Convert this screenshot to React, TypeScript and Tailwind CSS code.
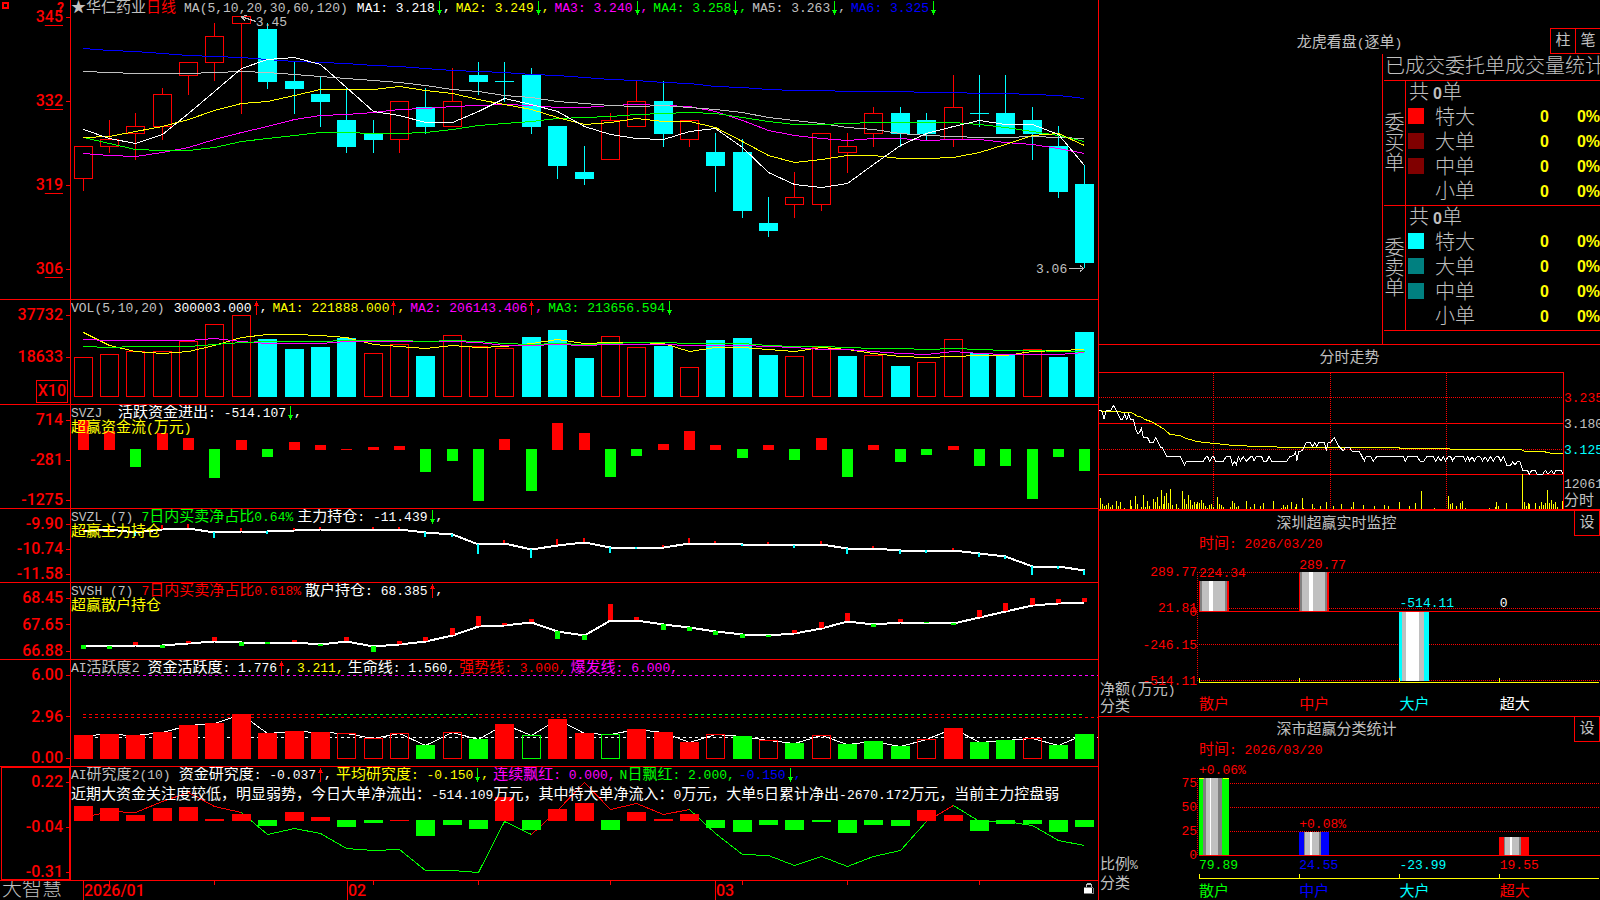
import type { ReactNode } from "react";
import clsx from "clsx";

const RED = "#ff0000";
const GREEN = "#00ff00";
const CYAN = "#00ffff";
const YELLOW = "#ffff00";
const MAGENTA = "#ff00ff";
const BLUE = "#0000ff";
const GREY = "#c0c0c0";
const DARK = "#808080";
const WHITE = "#ffffff";

// Plot area of the left column: x runs from 71 to 1098
const PLOT_LEFT = 71;
const PLOT_WIDTH = 1027;

const barX = (i: number) => Math.floor(83.2 + i * 26.358);
const points = (ys: number[], from = 0) =>
  ys.map((y, i) => `${barX(i + from) + 0.5},${y + 0.5}`).join(" ");

// [body top, body bottom, high, low, rising]
type Candle = [number, number, number, number, number];

const candles: Candle[] = [
  [146, 178, 146, 191, 1],
  [139, 146, 120, 153, 1],
  [126, 133, 113, 160, 1],
  [94, 126, 88, 140, 1],
  [62, 75, 62, 95, 1],
  [36, 62, 23, 81, 1],
  [16, 23, 16, 114, 1],
  [29, 82, 23, 89, 0],
  [81, 89, 62, 114, 0],
  [94, 102, 76, 127, 0],
  [120, 147, 88, 153, 0],
  [134, 140, 120, 153, 0],
  [101, 139, 101, 153, 1],
  [107, 127, 88, 134, 0],
  [101, 126, 68, 126, 1],
  [75, 82, 62, 95, 0],
  [81, 82, 62, 102, 0],
  [75, 127, 68, 134, 0],
  [126, 166, 126, 179, 0],
  [172, 179, 146, 185, 0],
  [120, 159, 113, 159, 1],
  [101, 126, 81, 126, 1],
  [101, 134, 81, 147, 0],
  [120, 139, 120, 147, 1],
  [152, 166, 133, 192, 0],
  [152, 211, 139, 218, 0],
  [223, 231, 197, 237, 0],
  [197, 204, 172, 218, 1],
  [133, 204, 133, 211, 1],
  [146, 152, 133, 173, 1],
  [113, 133, 107, 147, 1],
  [113, 134, 107, 147, 0],
  [120, 134, 113, 141, 0],
  [107, 139, 75, 147, 1],
  [113, 114, 75, 127, 0],
  [113, 134, 75, 134, 0],
  [120, 134, 107, 160, 0],
  [146, 192, 126, 198, 0],
  [184, 263, 165, 268, 0],
];

const priceLines = [
  { color: BLUE, ys: [48, 50, 51, 53, 55, 56, 57, 59, 61, 62, 63, 65, 66, 68, 70, 71, 72, 74, 75, 77, 79, 80, 82, 83, 86, 87, 89, 90, 90, 91, 91, 91, 92, 92, 93, 93, 94, 95, 98] },
  { color: MAGENTA, ys: [153, 155, 156, 152, 147, 139, 132, 126, 119, 115, 114, 112, 109, 108, 106, 105, 104, 105, 107, 107, 105, 104, 105, 106, 111, 120, 130, 135, 138, 140, 138, 138, 140, 139, 139, 142, 144, 148, 153] },
  { color: GREY, ys: [71, 72, 73, 73, 73, 72, 71, 72, 74, 76, 78, 80, 82, 85, 89, 91, 95, 97, 101, 103, 105, 106, 105, 107, 109, 112, 117, 120, 123, 127, 129, 133, 135, 136, 137, 137, 136, 137, 138] },
  { color: GREEN, ys: [137, 143, 149, 150, 150, 147, 141, 138, 135, 132, 132, 133, 133, 132, 129, 125, 123, 121, 118, 117, 116, 114, 113, 112, 113, 117, 121, 124, 124, 123, 122, 122, 122, 122, 124, 127, 131, 135, 141] },
  { color: YELLOW, ys: [137, 136, 131, 126, 119, 110, 103, 101, 95, 89, 89, 89, 86, 90, 93, 99, 104, 109, 117, 124, 122, 118, 121, 121, 127, 141, 155, 162, 159, 155, 155, 158, 158, 157, 152, 144, 135, 133, 145] },
  { color: WHITE, ys: [129, 138, 143, 134, 113, 91, 68, 59, 57, 64, 87, 111, 115, 122, 122, 111, 98, 104, 111, 126, 134, 138, 139, 131, 128, 147, 172, 184, 187, 183, 164, 145, 133, 126, 120, 124, 124, 134, 165] },
];

const volumeTops = [357, 354, 351, 351, 341, 324, 315, 339, 349, 347, 338, 353, 344, 356, 335, 346, 348, 337, 330, 358, 336, 347, 346, 367, 340, 338, 355, 356, 347, 356, 355, 366, 362, 339, 353, 355, 349, 357, 332];
const volumeRising = [1, 1, 1, 1, 1, 1, 1, 0, 0, 0, 0, 1, 1, 0, 1, 1, 1, 0, 0, 0, 1, 1, 0, 1, 0, 0, 0, 1, 1, 0, 1, 0, 1, 1, 0, 0, 1, 0, 0];

const volumeLines = [
  { color: YELLOW, ys: [332, 345, 351, 353, 351, 345, 337, 334, 334, 335, 337, 344, 346, 348, 345, 347, 346, 343, 339, 343, 342, 342, 343, 351, 347, 347, 349, 351, 347, 349, 353, 356, 357, 356, 355, 355, 351, 350, 349] },
  { color: MAGENTA, ys: [339, 340, 340, 340, 340, 338, 341, 343, 343, 343, 341, 341, 341, 341, 341, 342, 345, 345, 344, 345, 344, 344, 344, 345, 345, 345, 346, 347, 349, 349, 351, 353, 354, 351, 353, 354, 354, 354, 352] },
  { color: GREEN, ys: [346, 347, 346, 346, 346, 344, 342, 341, 341, 341, 340, 340, 340, 341, 340, 341, 343, 344, 343, 344, 343, 342, 342, 343, 343, 343, 345, 346, 346, 347, 348, 348, 349, 348, 349, 350, 350, 351, 351] },
];

// Signed heights: positive above the zero line
const fundFlow = [30, 19, -18, 17, 12, -29, 10, -8, 8, 5, 1, 3, 4, -23, -12, -52, 11, -42, 27, 17, -28, -7, 6, 19, 5, -9, 5, -11, 12, -28, 5, -13, -6, 4, -17, -17, -50, -8, -22];

const mainHold = [531, 529, 532, 529, 528, 532, 531, 531, 530, 529, 529, 529, 529, 532, 534, 544, 543, 549, 545, 542, 547, 547, 547, 543, 543, 544, 544, 545, 544, 548, 548, 550, 550, 550, 553, 556, 566, 566, 570];
const mainHoldTicks = [2, 4, -4, 4, 4, -6, 3, -3, 2, 2, 0, 2, 2, -5, -3, -10, 3, -9, 6, 4, -6, -2, 2, 5, 2, -2, 2, -3, 3, -6, 2, -4, -3, 2, -4, -3, -9, -3, -5];

const retailHold = [645, 646, 645, 645, 643, 641, 642, 642, 642, 644, 641, 646, 644, 641, 635, 626, 625, 622, 631, 635, 620, 620, 624, 627, 631, 634, 635, 633, 628, 621, 624, 622, 622, 623, 617, 611, 605, 603, 602];
const retailTicks = [-4, -3, 3, -3, 2, 4, -4, -2, 2, -2, 4, -6, 3, 4, 7, 10, 2, 3, -8, -5, 16, 3, -6, -4, -4, -4, -2, 3, 6, 8, -3, 3, -1, -2, 7, 8, 7, 4, 4];

// Upper case is a filled bar, lower case an outlined one
const activityKinds = "RRRRRRRRRRrrrGrGRgRRgRRRrGrGrGGGrRGGrGG";
const activityTops = [735, 734, 735, 732, 725, 723, 714, 733, 731, 732, 733, 738, 733, 745, 732, 739, 724, 735, 719, 733, 734, 729, 732, 742, 734, 736, 740, 743, 735, 744, 741, 746, 739, 728, 742, 740, 738, 745, 734];

const researchBars = [15, 13, 6, 13, 14, 2, 7, -6, 9, 4, -7, -3, 1, -16, -5, -9, 24, -10, 12, 18, -10, 9, 2, 7, -8, -12, -5, -10, -2, -13, -5, -6, 11, 6, -11, -4, -4, -12, -7];
const researchLine = [817, 811, 812, 801, 792, 806, 812, 834, 828, 833, 848, 850, 849, 870, 870, 872, 821, 834, 810, 782, 809, 803, 814, 809, 833, 854, 855, 865, 856, 866, 856, 850, 821, 805, 821, 821, 825, 840, 845];
const researchRuns: [number, number, string][] = [
  [0, 6, RED],
  [6, 17, GREEN],
  [17, 23, RED],
  [23, 32, GREEN],
  [32, 33, RED],
  [33, 38, GREEN],
];

// Intraday chart units: 3 per pixel
const intradayAverage =
  "27,211 48,216 62,214 79,213 92,216 118,217 130,220 142,229 154,231 164,238 184,245 200,254 220,266 240,283 270,287 290,296 320,304 340,307 370,310 426,316 492,319 594,322 925,322 930,325 1078,325 1082,328 1293,328 1305,334 1357,334 1385,340 1420,340";
const intradayPrice =
  "28,211 36,215 42,237 48,212 62,211 70,196 76,205 92,238 98,237 104,223 110,238 116,223 122,238 130,238 138,270 143,280 148,279 154,265 160,291 172,292 180,307 190,307 197,293 212,322 216,322 230,349 270,349 284,375 289,364 340,364 348,350 353,350 359,364 367,350 371,350 377,364 400,364 408,350 421,350 428,375 434,364 439,375 445,350 451,363 460,350 469,364 482,350 488,350 492,363 499,350 515,350 521,364 530,364 537,349 545,364 590,364 599,350 611,346 617,335 620,364 626,335 637,332 649,307 661,307 667,320 674,308 680,320 686,308 703,308 709,332 714,308 722,307 733,292 745,318 760,332 767,322 779,322 786,334 808,334 823,363 828,350 842,350 850,363 860,350 940,349 946,364 953,350 982,350 990,363 1002,363 1010,350 1030,350 1037,363 1045,350 1053,363 1060,350 1067,363 1074,350 1082,350 1088,363 1095,350 1120,350 1126,363 1133,350 1139,363 1146,350 1153,363 1161,350 1170,350 1178,363 1185,350 1193,363 1201,350 1210,363 1218,350 1226,350 1232,363 1240,350 1250,375 1262,375 1268,365 1275,375 1282,365 1290,365 1298,391 1312,391 1318,402 1325,391 1335,391 1342,403 1358,403 1366,391 1374,403 1384,391 1392,403 1398,391 1413,391 1420,403";
const intradayVolume = [
  [31, 474], [37, 492], [43, 498], [49, 495], [55, 489], [61, 501], [67, 495], [79, 483], [85, 498], [91, 486], [103, 504], [121, 480], [124, 498],
  [136, 468], [142, 492], [154, 501], [160, 465], [166, 501], [172, 483], [178, 498], [190, 477], [196, 486], [202, 471], [208, 498], [214, 450],
  [220, 492], [223, 468], [229, 459], [235, 489], [241, 447], [247, 495], [259, 492], [265, 504], [277, 453], [283, 477], [289, 492], [295, 465],
  [301, 480], [307, 495], [313, 486], [319, 492], [322, 486], [328, 489], [334, 480], [340, 489], [346, 498], [352, 504], [358, 495], [364, 492],
  [370, 501], [382, 471], [388, 492], [394, 495], [400, 501], [421, 501], [427, 483], [433, 489], [439, 501], [445, 498], [469, 483], [481, 501],
  [493, 492], [511, 498], [520, 489], [550, 483], [574, 504], [580, 495], [586, 501], [592, 495], [604, 486], [616, 501], [619, 492], [637, 474],
  [640, 504], [667, 492], [673, 504], [691, 498], [709, 486], [730, 498], [754, 492], [784, 501], [790, 486], [820, 495], [853, 498], [883, 495],
  [895, 498], [928, 486], [958, 498], [976, 489], [994, 453], [1033, 504], [1075, 468], [1081, 492], [1087, 489], [1099, 498], [1111, 489],
  [1117, 483], [1126, 504], [1198, 504], [1216, 501], [1219, 486], [1225, 498], [1249, 489], [1297, 403], [1303, 486], [1309, 498], [1315, 489],
  [1318, 492], [1336, 489], [1348, 498], [1354, 486], [1360, 495], [1366, 489], [1372, 450], [1378, 489], [1384, 480], [1390, 492], [1396, 486],
  [1402, 501], [1417, 483],
];

/** Mixed text: wide characters and half-width ones have their own size. */
function Txt({ children }: { children: string }) {
  const parts = children.split(/([\u2600-\uffff]+)/).filter(Boolean);
  return (
    <>
      {parts.map((part, i) =>
        /^[\u2600-\uffff]/.test(part) ? (
          <span key={i} className="text-[15px]">
            {part}
          </span>
        ) : (
          <span key={i} className="whitespace-pre text-[13px]">
            {part}
          </span>
        ),
      )}
    </>
  );
}

function Arrow({ dir }: { dir: "up" | "down" }) {
  return (
    <svg className="h-3.5 w-2 shrink-0" viewBox="0 0 8 14" shapeRendering="crispEdges">
      {dir === "down" ? (
        <path d="M4 0h1v9h2v1h-1v2h-1v2h-1v-2h-1v-2h-1v-1h2z" fill={GREEN} />
      ) : (
        <path d="M4 14h1v-9h2v-1h-1v-2h-1v-2h-1v2h-1v2h-1v1h2z" fill={RED} />
      )}
    </svg>
  );
}

type LegendItem = {
  text: string;
  color: string;
  arrow?: "up" | "down";
  comma?: boolean;
};

type LegendProps = {
  title: ReactNode;
  items: LegendItem[];
  gap?: string;
};

function Legend({ title, items, gap = "gap-1" }: LegendProps) {
  return (
    <div className={clsx("absolute left-0 top-0 flex h-4 items-center whitespace-nowrap leading-4", gap)}>
      <span className="mr-1 text-[#c0c0c0]">{title}</span>
      {items.map((item) => (
        <span key={item.text} className={clsx("flex items-center", item.color)}>
          <span>
            <Txt>{item.text}</Txt>
          </span>
          {item.arrow && <Arrow dir={item.arrow} />}
          {item.comma && <Txt>,</Txt>}
        </span>
      ))}
    </div>
  );
}

function AxisLabel({ children }: { children: ReactNode }) {
  return (
    <div className="flex h-4 items-center justify-end gap-[3px]">
      <span>{children}</span>
      <span className="h-px w-1 bg-[#f00]" />
    </div>
  );
}

type PanelProps = {
  height: string;
  labels?: string[];
  top: number;
  size: number;
  chart: ReactNode;
  axisClass?: string;
  axis?: ReactNode;
  children?: ReactNode;
};

function Panel({ height, labels = [], top, size, chart, axisClass = "pt-[7px]", axis, children }: PanelProps) {
  return (
    <section className={clsx("flex border-b border-[#f00]", height)}>
      <div
        className={clsx(
          "relative flex w-[71px] shrink-0 flex-col justify-between border-r border-[#f00] font-['Roboto','Liberation_Sans',sans-serif] text-base font-medium leading-4 text-[#f00]",
          axisClass,
        )}
      >
        {axis ?? labels.map((label) => <AxisLabel key={label}>{label}</AxisLabel>)}
      </div>
      <div className="relative min-w-0 flex-1 overflow-hidden">
        <svg
          className="block h-full w-full"
          viewBox={`${PLOT_LEFT} ${top} ${PLOT_WIDTH} ${size}`}
          preserveAspectRatio="none"
          shapeRendering="crispEdges"
          fill="none"
        >
          {chart}
        </svg>
        {children}
      </div>
    </section>
  );
}

function PriceChart() {
  return (
    <>
      {candles.map(([top, bottom, high, low, rising], i) => {
        const x = barX(i);
        return rising ? (
          <g key={i} stroke={RED}>
            <path d={`M${x + 0.5} ${high}V${top}M${x + 0.5} ${bottom}V${low}`} />
            <rect x={x - 8.5} y={top + 0.5} width="18" height={bottom - top} />
          </g>
        ) : (
          <g key={i} fill={CYAN}>
            <rect x={x} y={high} width="1" height={low - high} />
            <rect x={x - 9} y={top} width="19" height={bottom - top} />
          </g>
        );
      })}
      {priceLines.map((line) => (
        <polyline key={line.color} points={points(line.ys)} stroke={line.color} />
      ))}
      <path d="M241 16.5l15 5M241 16.5l6 -1M241 16.5l4 4" stroke={GREY} />
      <path d="M1069 268.5h15M1084 268.5l-4 -3M1084 268.5l-4 3" stroke={GREY} />
    </>
  );
}

function VolumeChart() {
  return (
    <>
      {volumeTops.map((y, i) =>
        volumeRising[i] ? (
          <rect key={i} x={barX(i) - 8.5} y={y + 0.5} width="18" height={396 - y} stroke={RED} />
        ) : (
          <rect key={i} x={barX(i) - 9} y={y} width="19" height={397 - y} fill={CYAN} />
        ),
      )}
      {volumeLines.map((line) => (
        <polyline key={line.color} points={points(line.ys)} stroke={line.color} />
      ))}
    </>
  );
}

function SignedBars({ values, zero, width }: { values: number[]; zero: number; width: number }) {
  return (
    <>
      {values.map((v, i) => (
        <rect
          key={i}
          x={barX(i) - (width - 1) / 2}
          y={v > 0 ? zero + 1 - v : zero}
          width={width}
          height={Math.abs(v)}
          fill={v > 0 ? RED : GREEN}
        />
      ))}
    </>
  );
}

function HoldChart({ line, ticks, width, down }: { line: number[]; ticks: number[]; width: number; down: string }) {
  return (
    <>
      <polyline points={points(line)} stroke={WHITE} strokeWidth="2" />
      {ticks.map((v, i) => (
        <rect
          key={i}
          x={barX(i) - Math.floor(width / 2)}
          y={v > 0 ? line[i] - v : line[i]}
          width={width}
          height={Math.abs(v)}
          fill={v > 0 ? RED : down}
        />
      ))}
    </>
  );
}

function ActivityChart() {
  const greenRuns = `M${barX(9)} 714.5H${barX(15)}M${barX(23)} 714.5H${barX(32)}M${barX(33)} 714.5H1084`;
  return (
    <>
      <path d="M83 675.5H1098" stroke={MAGENTA} strokeDasharray="3 3" />
      <path d="M83 714.5H1084M83 717.5H1098" stroke={RED} strokeDasharray="3 3" />
      <path d={greenRuns} stroke="#000" />
      <path d={greenRuns} stroke={GREEN} strokeDasharray="3 3" />
      <path d="M83 737.5H1098" stroke={WHITE} strokeDasharray="3 3" />
      <polyline points={points(activityTops)} stroke={WHITE} />
      {activityTops.map((y, i) => {
        const kind = activityKinds[i];
        const color = kind.toUpperCase() === "R" ? RED : GREEN;
        return kind === kind.toUpperCase() ? (
          <rect key={i} x={barX(i) - 9} y={y} width="19" height={759 - y} fill={color} />
        ) : (
          <rect key={i} x={barX(i) - 8.5} y={y + 0.5} width="18" height={758 - y} stroke={color} />
        );
      })}
    </>
  );
}

function ResearchChart() {
  return (
    <>
      {researchRuns.map(([from, to, color]) => (
        <polyline key={from} points={points(researchLine.slice(from, to + 1), from)} stroke={color} />
      ))}
      <SignedBars values={researchBars} zero={820} width={19} />
    </>
  );
}

function Caption({ children }: { children: string }) {
  return (
    <p className="absolute left-0 top-[15px] whitespace-nowrap leading-4 text-[#ff0]">
      <Txt>{children}</Txt>
    </p>
  );
}

function TimeAxis() {
  return (
    <footer className="flex h-[19px] overflow-hidden">
      <div className="w-[71px] shrink-0 pl-0.5 text-xl font-light leading-5 text-[#c0c0c0]">大智慧</div>
      <div className="relative grid min-w-0 flex-1 grid-cols-[12fr_264fr_368fr_383fr] font-['Roboto','Liberation_Sans',sans-serif] text-base font-medium leading-5 text-[#f00]">
        <span />
        <span className="border-l border-[#f00]">2026/01</span>
        <span className="border-l border-[#f00]">02</span>
        <span className="border-l border-[#f00]">03</span>
        <svg
          className="absolute left-0 top-0 h-1 w-full"
          viewBox={`${PLOT_LEFT} 0 ${PLOT_WIDTH} 4`}
          preserveAspectRatio="none"
          shapeRendering="crispEdges"
        >
          {[1, 5, 11, 15, 20, 25, 29, 34].map((i) => (
            <rect key={i} x={barX(i)} y="0" width="1" height="4" fill={RED} />
          ))}
        </svg>
        <svg className="absolute right-1 top-0.5 h-3 w-2.5" viewBox="0 0 10 12" shapeRendering="crispEdges">
          <path d="M2 4V1h1V0h4v1h1v3H7V2H3v2z" fill={GREY} />
          <path d="M0 5h8v5H0z" fill={WHITE} />
          <path d="M0 4h9v1H0zM9 5h1v6H0v-1h9z" fill={DARK} />
        </svg>
      </div>
    </footer>
  );
}

type OrderRow = { name: string; swatch: string };

const buyRows: OrderRow[] = [
  { name: "特大", swatch: "bg-[#f00]" },
  { name: "大单", swatch: "bg-[#800000]" },
  { name: "中单", swatch: "bg-[#800000]" },
  { name: "小单", swatch: "bg-black" },
];

const sellRows: OrderRow[] = [
  { name: "特大", swatch: "bg-[#0ff]" },
  { name: "大单", swatch: "bg-[#008080]" },
  { name: "中单", swatch: "bg-[#008080]" },
  { name: "小单", swatch: "bg-black" },
];

function OrderGroup({ side, rows }: { side: string; rows: OrderRow[] }) {
  return (
    <tbody>
      <tr className="h-[25px]">
        <th
          rowSpan={5}
          scope="rowgroup"
          className="border-b border-r border-[#f00] p-0 pt-1 text-center text-xl font-light leading-5"
        >
          {side.split("").map((char) => (
            <span key={char} className="block">
              {char}
            </span>
          ))}
        </th>
        <td colSpan={4} className="p-0 pl-[3px]">
          共<b className="ml-1 font-['Liberation_Sans',Arial,sans-serif] text-base font-bold leading-5">0</b>单
        </td>
      </tr>
      {rows.map((row, i) => (
        <tr
          key={row.name}
          className={clsx("h-[25px]", i === rows.length - 1 && "[&>td]:border-b [&>td]:border-[#f00]")}
        >
          <td className="p-0 pl-0.5 pt-0.5 align-top">
            <span className={clsx("block size-4", row.swatch)} />
          </td>
          <td className="p-0">{row.name}</td>
          <td className="p-0 text-right align-top font-['Liberation_Sans',Arial,sans-serif] text-base font-bold leading-[22px] text-[#ff0]">
            0
          </td>
          <td className="p-0 text-right align-top font-['Liberation_Sans',Arial,sans-serif] text-base font-bold leading-[22px] text-[#ff0]">
            0%
          </td>
        </tr>
      ))}
    </tbody>
  );
}

function OrderPanel() {
  return (
    <section className="flex h-[345px] flex-col overflow-hidden border-b border-[#f00] pt-7">
      <header className="relative flex h-[26px] shrink-0 items-center justify-center text-[#c0c0c0]">
        <h2 className="pt-1">
          <Txt>龙虎看盘(逐单)</Txt>
        </h2>
        <div className="absolute -right-px top-0 flex">
          <button type="button" className="size-[26px] border border-[#f00] pt-px text-[15px] leading-4">
            柱
          </button>
          <button type="button" className="-ml-px size-[26px] border border-[#f00] pt-px text-[15px] leading-4">
            笔
          </button>
        </div>
      </header>
      <div className="ml-auto w-[218px] flex-1 overflow-hidden border-l border-[#f00] pl-px text-xl font-light leading-5 text-[#c0c0c0]">
        <h3 className="h-[27px] whitespace-nowrap border-b border-[#f00] pl-px font-light leading-7">
          已成交委托单成交量统计
        </h3>
        <table className="w-full table-fixed border-separate border-spacing-0">
          <colgroup>
            <col className="w-[22px]" />
            <col className="w-[29px]" />
            <col />
            <col className="w-[60px]" />
            <col className="w-[51px]" />
          </colgroup>
          <OrderGroup side="委买单" rows={buyRows} />
          <OrderGroup side="委卖单" rows={sellRows} />
        </table>
      </div>
    </section>
  );
}

function IntradayPanel() {
  return (
    <section className="flex h-[166px] flex-col border-b border-[#f00]">
      <h2 className="flex h-[27px] items-center justify-center pt-0.5 text-[#c0c0c0]">
        <Txt>分时走势</Txt>
      </h2>
      <div className="flex min-h-0 flex-1 border-b border-[#f00]">
        <div className="min-w-0 flex-1 border-r border-t border-[#f00]">
          <svg
            className="block h-full w-full"
            viewBox="27 99 1392 408"
            preserveAspectRatio="none"
            shapeRendering="crispEdges"
            fill="none"
            strokeWidth="3"
          >
            <path
              d="M27 172.5H1420M27 328.5H1420M370.5 99V507M721.5 99V507M1069.5 99V507"
              stroke={RED}
              strokeDasharray="3 3"
            />
            <path d="M27 250.5H1420M27 403.5H1420" stroke={RED} />
            <polyline points={intradayAverage} stroke={YELLOW} />
            <polyline points={intradayPrice} stroke={WHITE} />
            {intradayVolume.map(([x, y]) => (
              <rect key={x} x={x - 1} y={y} width="3" height={507 - y} fill={YELLOW} />
            ))}
          </svg>
        </div>
        <div className="flex w-9 shrink-0 flex-col overflow-hidden whitespace-nowrap pt-[13px] text-[#c0c0c0]">
          <span className="h-[26px] leading-[26px] text-[#f00]">
            <Txt>3.235</Txt>
          </span>
          <span className="h-[26px] leading-[26px]">
            <Txt>3.180</Txt>
          </span>
          <span className="h-[26px] leading-[26px] text-[#0ff]">
            <Txt>3.125</Txt>
          </span>
          <span className="mt-[13px] h-[18px] leading-4">
            <Txt>12061</Txt>
          </span>
          <span className="h-4 leading-4">
            <Txt>分时</Txt>
          </span>
        </div>
      </div>
    </section>
  );
}

// Shaded column: [width, color] strips from left to right
type Strip = [number, string];

function Cylinder({ x, y, height, strips }: { x: number; y: number; height: number; strips: Strip[] }) {
  let offset = x;
  return (
    <>
      {strips.map(([width, color], i) => {
        const left = offset;
        offset += width;
        return <rect key={i} x={left} y={y} width={width} height={height} fill={color} />;
      })}
    </>
  );
}

const redStrips: Strip[] = [[1, RED], [2, DARK], [7, GREY], [4, WHITE], [12, GREY], [2, DARK], [2, RED]];
const cyanStrips: Strip[] = [[3, CYAN], [4, GREY], [13, WHITE], [5, GREY], [5, CYAN]];
const greenStrips: Strip[] = [[4, GREEN], [3, DARK], [4, GREY], [1, WHITE], [7, GREY], [4, DARK], [7, GREEN]];
const shortStrips = (color: string): Strip[] => [[5, color], [1, DARK], [5, GREY], [2, WHITE], [7, GREY], [2, DARK], [8, color]];

function StatHeader({ title }: { title: string }) {
  return (
    <header className="flex items-start">
      <h2 className="flex h-6 flex-1 items-center justify-center pt-1 text-[#c0c0c0]">
        <Txt>{title}</Txt>
      </h2>
      <button
        type="button"
        className="-mt-px size-[26px] border border-[#f00] pt-0.5 text-[15px] leading-4 text-[#c0c0c0]"
      >
        设
      </button>
    </header>
  );
}

function CategoryRow({ items }: { items: [string, string][] }) {
  return (
    <div className="grid grid-cols-4 pl-0.5 leading-4">
      {items.map(([name, color], i) => (
        <span key={i} className={color}>
          <Txt>{name}</Txt>
        </span>
      ))}
    </div>
  );
}

function MonitorPanel() {
  return (
    <section className="flex h-[206px] flex-col border-b border-[#f00]">
      <StatHeader title="深圳超赢实时监控" />
      <p className="ml-[100px] h-4 leading-4 text-[#f00]">
        <Txt>时间: 2026/03/20</Txt>
      </p>
      <div className="flex flex-1 pt-[13px]">
        <div className="flex w-[98px] shrink-0 flex-col justify-between">
          <div className="relative flex h-[125px] flex-col justify-between text-right leading-4 text-[#f00]">
            <Txt>289.77</Txt>
            <Txt>21.81</Txt>
            <Txt>-246.15</Txt>
            <Txt>-514.11</Txt>
            <span className="absolute right-0 top-[39px]">
              <Txt>0</Txt>
            </span>
          </div>
          <div className="-mt-2 pl-px leading-4 text-[#c0c0c0]">
            <div>
              <Txt>净额(万元)</Txt>
            </div>
            <div className="pb-1">
              <Txt>分类</Txt>
            </div>
          </div>
        </div>
        <div className="relative min-w-0 flex-1">
          <svg
            className="block h-[120px] w-full"
            viewBox="1197 565 403 120"
            preserveAspectRatio="none"
            shapeRendering="crispEdges"
            fill="none"
          >
            <path
              d="M1197.5 572V680M1197 572.5H1600M1197 608.5H1600M1197 644.5H1600M1197 680.5H1600"
              stroke={RED}
              strokeDasharray="1 1"
            />
            <Cylinder x={1199} y={581} height={30} strips={redStrips} />
            <Cylinder x={1299} y={572} height={39} strips={redStrips} />
            <Cylinder x={1399} y={612} height={69} strips={cyanStrips} />
            <path d="M1199 611.5H1600" stroke={RED} />
            <path d="M1199.5 678V682.5H1599M1299.5 678V682M1399.5 678V682M1499.5 678V682" stroke={YELLOW} />
          </svg>
          <div className="absolute inset-x-0 top-0 grid grid-cols-4 pl-0.5 leading-4">
            <span className="text-[#f00]">
              <Txt>224.34</Txt>
            </span>
            <span className="-mt-2 text-[#f00]">
              <Txt>289.77</Txt>
            </span>
            <span className="mt-[30px] text-[#0ff]">
              <Txt>-514.11</Txt>
            </span>
            <span className="mt-[30px] text-white">
              <Txt>0</Txt>
            </span>
          </div>
          <div className="pt-3">
            <CategoryRow
              items={[
                ["散户", "text-[#f00]"],
                ["中户", "text-[#f00]"],
                ["大户", "text-[#0ff]"],
                ["超大", "text-white"],
              ]}
            />
          </div>
        </div>
      </div>
    </section>
  );
}

function SharePanel() {
  return (
    <section className="flex h-[183px] flex-col overflow-hidden">
      <StatHeader title="深市超赢分类统计" />
      <p className="ml-[100px] h-4 leading-4 text-[#f00]">
        <Txt>时间: 2026/03/20</Txt>
      </p>
      <div className="flex flex-1 pt-1">
        <div className="flex w-[98px] shrink-0 flex-col">
          <div className="mt-[14px] flex h-[88px] flex-col justify-between text-right leading-4 text-[#f00]">
            <Txt>75</Txt>
            <Txt>50</Txt>
            <Txt>25</Txt>
            <Txt>0</Txt>
          </div>
          <div className="-mt-2 pl-px leading-[18px] text-[#c0c0c0]">
            <div>
              <Txt>比例%</Txt>
            </div>
            <div>
              <Txt>分类</Txt>
            </div>
          </div>
        </div>
        <div className="relative min-w-0 flex-1">
          <svg
            className="block h-[118px] w-full"
            viewBox="1197 762 403 118"
            preserveAspectRatio="none"
            shapeRendering="crispEdges"
            fill="none"
          >
            <path
              d="M1197.5 778V855M1230 783.5H1600M1230 807.5H1600M1230 831.5H1600"
              stroke={RED}
              strokeDasharray="1 1"
            />
            <Cylinder x={1199} y={778} height={77} strips={greenStrips} />
            <path d="M1199 778.5h5M1223 778.5h6" stroke={YELLOW} />
            <Cylinder x={1299} y={832} height={23} strips={shortStrips(BLUE)} />
            <Cylinder x={1499} y={837} height={18} strips={shortStrips(RED)} />
            <path d="M1199 855.5H1600" stroke={RED} />
            <path d="M1199.5 874V878.5H1599M1299.5 874V878M1399.5 874V878M1499.5 874V878" stroke={YELLOW} />
          </svg>
          <div className="absolute inset-x-0 top-0 grid grid-cols-4 pl-0.5 leading-4 text-[#f00]">
            <span>
              <Txt>+0.06%</Txt>
            </span>
            <span className="mt-[54px]">
              <Txt>+0.08%</Txt>
            </span>
          </div>
          <div className="absolute inset-x-0 top-[95px]">
            <CategoryRow
              items={[
                ["79.89", "text-[#0f0]"],
                ["24.55", "text-[#00f]"],
                ["-23.99", "text-[#0ff]"],
                ["19.55", "text-[#f00]"],
              ]}
            />
          </div>
          <div className="pt-1">
            <CategoryRow
              items={[
                ["散户", "text-[#0f0]"],
                ["中户", "text-[#00f]"],
                ["大户", "text-[#0ff]"],
                ["超大", "text-[#f00]"],
              ]}
            />
          </div>
        </div>
      </div>
    </section>
  );
}

export default function App() {
  return (
    <div className="grid min-h-screen grid-cols-[minmax(0,1099fr)_minmax(0,501fr)] content-start overflow-hidden bg-black font-['Liberation_Mono','Noto_Sans_CJK_SC',monospace] text-white">
      <main className="border-r border-[#f00]">
        <Panel
          height="h-[300px]"
          top={0}
          size={299}
          chart={<PriceChart />}
          axisClass="pt-[9px] pb-[22px]"
          axis={
            <>
              <span className="absolute left-0.5 top-0.5 size-[7px] border-2 border-[#f00]" />
              <b className="absolute left-[57px] top-0 text-sm leading-4">?</b>
              {["345", "332", "319", "306"].map((label) => (
                <AxisLabel key={label}>
                  {label[0]}
                  <span className="underline decoration-1 underline-offset-[3px]">{label.slice(1)}</span>
                </AxisLabel>
              ))}
            </>
          }
        >
          <Legend
            gap="gap-[5px]"
            title={
              <>
                <Txt>★华仁药业</Txt>
                <span className="mr-2 text-[#f00]">
                  <Txt>日线</Txt>
                </span>
                <Txt>MA(5,10,20,30,60,120)</Txt>
              </>
            }
            items={[
              { text: "MA1: 3.218", color: "text-white", arrow: "down", comma: true },
              { text: "MA2: 3.249", color: "text-[#ff0]", arrow: "down", comma: true },
              { text: "MA3: 3.240", color: "text-[#f0f]", arrow: "down", comma: true },
              { text: "MA4: 3.258", color: "text-[#0f0]", arrow: "down", comma: true },
              { text: "MA5: 3.263", color: "text-[#c0c0c0]", arrow: "down", comma: true },
              { text: "MA6: 3.325", color: "text-[#00f]", arrow: "down" },
            ]}
          />
          <span className="absolute left-[18%] top-3.5 leading-4 text-[#c0c0c0]">
            <Txt>3.45</Txt>
          </span>
          <span className="absolute right-[3%] top-[261px] leading-4 text-[#c0c0c0]">
            <Txt>3.06</Txt>
          </span>
        </Panel>

        <Panel
          height="h-[105px]"
          top={300}
          size={104}
          chart={<VolumeChart />}
          axisClass="pt-[7px]"
          axis={
            <>
              <AxisLabel>37732</AxisLabel>
              <div className="flex flex-col gap-[15px]">
                <AxisLabel>18633</AxisLabel>
                <span className="mb-px mr-0.5 h-[23px] self-end border border-[#f00] px-px leading-5">X10</span>
              </div>
            </>
          }
        >
          <Legend
            gap="gap-[5px]"
            title={<Txt>VOL(5,10,20)</Txt>}
            items={[
              { text: "300003.000", color: "text-white", arrow: "up", comma: true },
              { text: "MA1: 221888.000", color: "text-[#ff0]", arrow: "up", comma: true },
              { text: "MA2: 206143.406", color: "text-[#f0f]", arrow: "up", comma: true },
              { text: "MA3: 213656.594", color: "text-[#0f0]", arrow: "down" },
            ]}
          />
        </Panel>

        <Panel
          height="h-[104px]"
          labels={["714", "-281", "-1275"]}
          top={405}
          size={103}
          chart={<SignedBars values={fundFlow} zero={449} width={11} />}
        >
          <Legend
            title={<Txt>{"SVZJ "}</Txt>}
            items={[{ text: "活跃资金进出: -514.107", color: "text-white", arrow: "down", comma: true }]}
          />
          <Caption>超赢资金流(万元)</Caption>
        </Panel>

        <Panel
          height="h-[74px]"
          labels={["-9.90", "-10.74", "-11.58"]}
          top={509}
          size={73}
          chart={<HoldChart line={mainHold} ticks={mainHoldTicks} width={2} down={CYAN} />}
        >
          <Legend
            title={<Txt>SVZL (7)</Txt>}
            items={[
              { text: "7日内买卖净占比0.64%", color: "text-[#0f0]" },
              { text: "主力持仓: -11.439", color: "text-white", arrow: "down", comma: true },
            ]}
          />
          <Caption>超赢主力持仓</Caption>
        </Panel>

        <Panel
          height="h-[77px]"
          labels={["68.45", "67.65", "66.88"]}
          top={583}
          size={76}
          chart={<HoldChart line={retailHold} ticks={retailTicks} width={5} down={GREEN} />}
        >
          <Legend
            title={<Txt>SVSH (7)</Txt>}
            items={[
              { text: "7日内买卖净占比0.618%", color: "text-[#f00]" },
              { text: "散户持仓: 68.385", color: "text-white", arrow: "up", comma: true },
            ]}
          />
          <Caption>超赢散户持仓</Caption>
        </Panel>

        <Panel
          height="h-[107px]"
          labels={["6.00", "2.96", "0.00"]}
          top={660}
          size={106}
          chart={<ActivityChart />}
        >
          <Legend
            title={<Txt>AI活跃度2</Txt>}
            items={[
              { text: "资金活跃度: 1.776", color: "text-white", arrow: "up", comma: true },
              { text: "3.211,", color: "text-[#ff0]" },
              { text: "生命线: 1.560,", color: "text-white" },
              { text: "强势线: 3.000,", color: "text-[#f00]" },
              { text: "爆发线: 6.000,", color: "text-[#f0f]" },
            ]}
          />
        </Panel>

        <Panel
          height="h-[114px]"
          labels={["0.22", "-0.04", "-0.31"]}
          top={767}
          size={113}
          chart={<ResearchChart />}
          axisClass="pt-[7px] before:absolute before:inset-y-0 before:left-px before:right-0 before:border before:border-[#f00]"
        >
          <Legend
            title={<Txt>AI研究度2(10)</Txt>}
            items={[
              { text: "资金研究度: -0.037", color: "text-white", arrow: "up", comma: true },
              { text: "平均研究度: -0.150", color: "text-[#ff0]", arrow: "down", comma: true },
              { text: "连续飘红: 0.000,", color: "text-[#f0f]" },
              { text: "N日飘红: 2.000,", color: "text-[#0f0]" },
              { text: "-0.150", color: "text-[#00f]", arrow: "down", comma: true },
            ]}
          />
          <p className="absolute left-0 top-5 whitespace-nowrap leading-4">
            <Txt>
              近期大资金关注度较低，明显弱势，今日大单净流出：-514.109万元，其中特大单净流入：0万元，大单5日累计净出-2670.172万元，当前主力控盘弱
            </Txt>
          </p>
        </Panel>

        <TimeAxis />
      </main>

      <aside>
        <OrderPanel />
        <IntradayPanel />
        <MonitorPanel />
        <SharePanel />
      </aside>
    </div>
  );
}
